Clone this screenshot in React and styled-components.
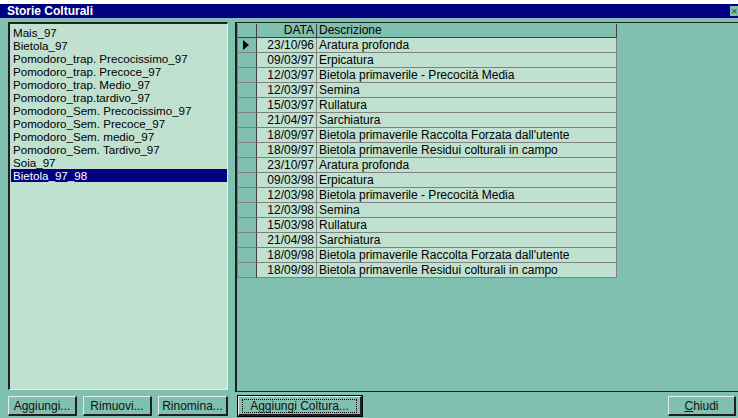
import React from 'react';
import styled, { createGlobalStyle } from 'styled-components';

const colture = [
    'Mais_97',
    'Bietola_97',
    'Pomodoro_trap. Precocissimo_97',
    'Pomodoro_trap. Precoce_97',
    'Pomodoro_trap. Medio_97',
    'Pomodoro_trap.tardivo_97',
    'Pomodoro_Sem. Precocissimo_97',
    'Pomodoro_Sem. Precoce_97',
    'Pomodoro_Sem. medio_97',
    'Pomodoro_Sem. Tardivo_97',
    'Soia_97',
    'Bietola_97_98',
];

const operazioni = [
    ['23/10/96', 'Aratura profonda'],
    ['09/03/97', 'Erpicatura'],
    ['12/03/97', 'Bietola primaverile - Precocità Media'],
    ['12/03/97', 'Semina'],
    ['15/03/97', 'Rullatura'],
    ['21/04/97', 'Sarchiatura'],
    ['18/09/97', 'Bietola primaverile Raccolta Forzata dall\'utente'],
    ['18/09/97', 'Bietola primaverile Residui colturali in campo'],
    ['23/10/97', 'Aratura profonda'],
    ['09/03/98', 'Erpicatura'],
    ['12/03/98', 'Bietola primaverile - Precocità Media'],
    ['12/03/98', 'Semina'],
    ['15/03/98', 'Rullatura'],
    ['21/04/98', 'Sarchiatura'],
    ['18/09/98', 'Bietola primaverile Raccolta Forzata dall\'utente'],
    ['18/09/98', 'Bietola primaverile Residui colturali in campo'],
];

const GlobalStyle = createGlobalStyle`
    html, body {
        margin: 0;
        padding: 0;
        background: #fff;
        overflow: hidden;
    }
    * {
        box-sizing: border-box;
    }
`;

const App = () => {
    return (
        <>
            <GlobalStyle />
            <Window>
                <TitleBar>
                    <span>Storie Colturali</span>
                    <CloseBox>×</CloseBox>
                </TitleBar>
                <Body>
                    <LeftColumn>
                        <ListBox>
                            {colture.map((c, i) => (
                                <ListItem key={c} selected={i === colture.length - 1}>
                                    {c}
                                </ListItem>
                            ))}
                        </ListBox>
                        <ButtonRow>
                            <Button width={69}>Aggiungi...</Button>
                            <Button width={69}>Rimuovi...</Button>
                            <Button width={70}>Rinomina...</Button>
                        </ButtonRow>
                    </LeftColumn>
                    <RightColumn>
                        <GridPanel>
                            <Grid>
                                <HeadCell />
                                <HeadCell align="right">DATA</HeadCell>
                                <HeadCell>Descrizione</HeadCell>
                                {operazioni.map(([data, descr], i) => (
                                    <React.Fragment key={i}>
                                        <SelectorCell>{i === 0 && <Arrow />}</SelectorCell>
                                        <Cell align="right">{data}</Cell>
                                        <Cell>{descr}</Cell>
                                    </React.Fragment>
                                ))}
                            </Grid>
                        </GridPanel>
                        <ButtonRow spread>
                            <Button width={124} isDefault>
                                <Focus>Aggiungi Coltura...</Focus>
                            </Button>
                            <Button width={68}>
                                <u>C</u>hiudi
                            </Button>
                        </ButtonRow>
                    </RightColumn>
                </Body>
            </Window>
        </>
    );
};

const Window = styled.div`
    width: 738px;
    height: 418px;
    padding-top: 4px;
    background: #fff;
    font-family: 'Liberation Sans', Arial, sans-serif;
    font-size: 12px;
    color: #000;
    display: flex;
    flex-direction: column;
`;

const TitleBar = styled.div`
    height: 14px;
    background: #000080;
    color: #fff;
    font-weight: bold;
    line-height: 14px;
    padding-left: 7px;
    display: flex;
    align-items: center;
    justify-content: space-between;
`;

const CloseBox = styled.div`
    width: 8px;
    height: 10px;
    overflow: hidden;
    background: #80c0b0;
    color: #204040;
    font-size: 11px;
    line-height: 10px;
    font-weight: normal;
    padding-left: 1px;
`;

const Body = styled.div`
    flex: 1;
    background: #80c0b0;
    display: flex;
    padding: 4px 0 2px 8px;
    gap: 7px;
`;

const LeftColumn = styled.div`
    width: 220px;
    display: flex;
    flex-direction: column;
`;

const ListBox = styled.div`
    height: 368px;
    background: #c0e0d0;
    border-top: 2px solid #202020;
    border-left: 2px solid #202020;
    border-right: 1px solid #e0f0e8;
    border-bottom: 1px solid #e0f0e8;
    padding: 2px 0 0 1px;
    font-size: 11.6px;
`;

const ListItem = styled.div`
    height: 13px;
    line-height: 13px;
    padding-left: 2px;
    white-space: nowrap;
    background: ${(p) => (p.selected ? '#000080' : 'transparent')};
    color: ${(p) => (p.selected ? '#fff' : '#000')};
`;

const ButtonRow = styled.div`
    display: flex;
    justify-content: ${(p) => (p.spread ? 'space-between' : 'flex-start')};
    gap: 6px;
    margin-top: ${(p) => (p.spread ? '4px' : '6px')};
    padding: ${(p) => (p.spread ? '0 2px 0 3px' : '0')};
`;

const Button = styled.div`
    width: ${(p) => p.width}px;
    height: 20px;
    background: #80c0b0;
    border-top: 1px solid #e0f0e8;
    border-left: 1px solid #e0f0e8;
    border-right: 2px solid #202020;
    border-bottom: 2px solid #202020;
    outline: ${(p) => (p.isDefault ? '1px solid #000' : 'none')};
    display: flex;
    align-items: center;
    justify-content: center;
    white-space: nowrap;
    color: #101010;
`;

const Focus = styled.span`
    border: 1px dotted #000;
    width: calc(100% - 6px);
    height: 14px;
    line-height: 12px;
    text-align: center;
`;

const RightColumn = styled.div`
    flex: 1;
    display: flex;
    flex-direction: column;
`;

const GridPanel = styled.div`
    height: 370px;
    border-top: 1px solid #202020;
    border-left: 2px solid #202020;
    border-bottom: 1px solid #202020;
    padding: 1px 0 0 0;
`;

const Grid = styled.div`
    display: grid;
    grid-template-columns: 19px 60px 300px;
    grid-template-rows: 14px;
    grid-auto-rows: 15px;
    border-left: 1px solid #808080;
    width: 380px;
`;

const HeadCell = styled.div`
    background: #80c0b0;
    border-right: 1px solid #404040;
    border-bottom: 1px solid #404040;
    line-height: 13px;
    text-align: ${(p) => p.align || 'left'};
    padding: 0 2px;
    white-space: nowrap;
`;

const SelectorCell = styled.div`
    background: #80c0b0;
    border-right: 1px solid #404040;
    border-bottom: 1px solid #808080;
    display: flex;
    align-items: center;
    padding-left: 5px;
`;

const Arrow = styled.div`
    width: 0;
    height: 0;
    border-top: 5px solid transparent;
    border-bottom: 5px solid transparent;
    border-left: 6px solid #000;
`;

const Cell = styled.div`
    background: #c0e0d0;
    border-right: 1px solid #808080;
    border-bottom: 1px solid #808080;
    line-height: 14px;
    text-align: ${(p) => p.align || 'left'};
    padding: 0 2px;
    white-space: nowrap;
    overflow: hidden;
`;

export default App;
